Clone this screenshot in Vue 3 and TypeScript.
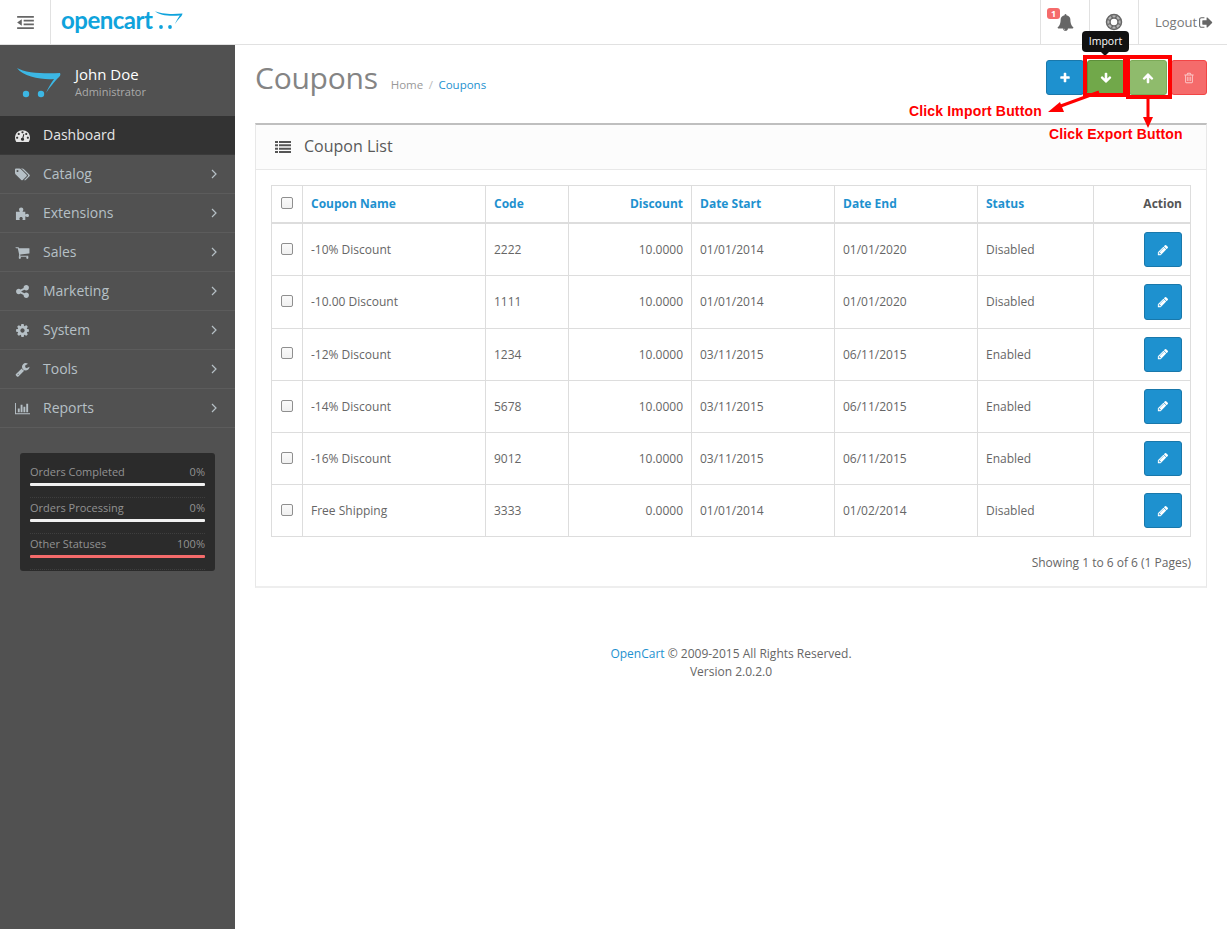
<template>
  <div class="page">
    <header class="topbar">
      <button class="menu-toggle" aria-label="Toggle menu">
        <svg viewBox="0 0 18 14" width="17" height="13"><path d="M0 0h18v2H0zM7 4h11v2H7zM7 8h11v2H7zM0 12h18v2H0zM5 3.500v7L0 7z" fill="#666" /></svg>
      </button>
      <div class="brand">
        <span class="brand-name">opencart</span>
        <svg class="brand-cart" viewBox="0 0 28 19" width="28" height="19">
          <path d="M0 0c5 3 17 3.500 27.500 2.500-.2 1.500-1 2.600-2.200 3.800-2 2-3.800 4.500-5.300 6.700 1-2.800 3-6 4.800-8.600C15 5.300 4 4.500 0 0z" fill="#0fa3dc" />
          <circle cx="6" cy="16" r="1.900" fill="#0fa3dc" /><circle cx="15" cy="16" r="1.900" fill="#0fa3dc" />
        </svg>
      </div>
      <ul class="top-links">
        <li class="bell">
          <span class="badge">1</span>
          <svg viewBox="0 0 1792 1792" width="17" height="17"><path :d="icons.bell.d" fill="#666" /></svg>
        </li>
        <li class="ring">
          <svg viewBox="0 0 18 18" width="18" height="18">
            <circle cx="9" cy="9" r="5.800" fill="none" stroke="#b5b5b5" stroke-width="3" />
            <circle cx="9" cy="9" r="7.500" fill="none" stroke="#666" stroke-width="1.500" />
            <circle cx="9" cy="9" r="4" fill="none" stroke="#666" stroke-width="1.500" />
            <path d="M6.500 2.500l1 3M11.500 2.500l-1 3M6.500 15.500l1-3M11.500 15.500l-1-3M2.500 6.500l3 1M15.500 6.500l-3 1M2.500 11.500l3-1M15.500 11.500l-3-1" stroke="#666" stroke-width="1.300" />
          </svg>
        </li>
        <li class="logout">
          <span>Logout</span>
          <svg viewBox="0 0 1664 1792" width="15" height="15"><path :d="icons.logout.d" fill="#666" /></svg>
        </li>
      </ul>
    </header>

    <div class="body-row">
      <aside class="sidebar">
        <div class="profile">
          <svg viewBox="0 0 44 32" width="44" height="32">
            <path d="M0 0c8 5 28 6 43 5 1 2 0 3-2 5-3 3-8 9-12 15 2-5 5-10 8-14C26 12 6 9 0 0z" fill="#3cb7e4" />
            <circle cx="9" cy="26" r="3.200" fill="#3cb7e4" /><circle cx="24" cy="26" r="3.200" fill="#3cb7e4" />
          </svg>
          <div>
            <div class="profile-name">John Doe</div>
            <small>Administrator</small>
          </div>
        </div>
        <nav>
          <a v-for="item in menu" :key="item.label" class="nav-item" :class="{ active: item.active }">
            <svg class="nav-icon" :viewBox="icons[item.icon].vb" width="15" height="15"><path :d="icons[item.icon].d" fill="currentColor" /></svg>
            <span>{{ item.label }}</span>
            <svg v-if="!item.active" class="nav-caret" viewBox="0 0 6 10" width="6" height="10"><path d="M1 1l4 4-4 4" fill="none" stroke="currentColor" stroke-width="1.200" /></svg>
          </a>
        </nav>
        <div class="stats">
          <div v-for="s in stats" :key="s.label" class="stat">
            <div class="stat-head"><span>{{ s.label }}</span><span>{{ s.value }}</span></div>
            <div class="stat-bar" :class="{ full: s.value === '100%' }"></div>
          </div>
        </div>
      </aside>

      <main class="content">
        <div class="page-header">
          <h1>Coupons</h1>
          <ul class="crumbs">
            <li>Home</li>
            <li class="sep">/</li>
            <li class="current">Coupons</li>
          </ul>
          <div class="actions">
            <button class="btn blue"><svg viewBox="0 0 1792 1792" width="12" height="12"><path :d="icons.plus.d" /></svg></button>
            <button class="btn green-dark"><svg viewBox="0 0 1792 1792" width="12" height="12"><path :d="icons.down.d" /></svg></button>
            <button class="btn green"><svg viewBox="0 0 1792 1792" width="12" height="12"><path :d="icons.up.d" /></svg></button>
            <button class="btn red"><svg viewBox="0 0 1792 1792" width="12" height="12"><path :d="icons.trash.d" /></svg></button>
          </div>
        </div>

        <section class="panel">
          <div class="panel-head">
            <svg viewBox="0 0 16 12" width="16" height="12"><path d="M0 0h3v2H0zM4 0h12v2H4zM0 3.300h3v2H0zM4 3.300h12v2H4zM0 6.700h3v2H0zM4 6.700h12v2H4zM0 10h3v2H0zM4 10h12v2H4z" fill="#555" /></svg>
            <h3>Coupon List</h3>
          </div>
          <div class="panel-body">
            <table>
              <thead>
                <tr>
                  <th class="check"><input type="checkbox" /></th>
                  <th class="link name">Coupon Name</th>
                  <th class="link code">Code</th>
                  <th class="link right disc">Discount</th>
                  <th class="link start">Date Start</th>
                  <th class="link end">Date End</th>
                  <th class="link status">Status</th>
                  <th class="right">Action</th>
                </tr>
              </thead>
              <tbody>
                <tr v-for="c in coupons" :key="c.code">
                  <td class="check"><input type="checkbox" /></td>
                  <td>{{ c.name }}</td>
                  <td>{{ c.code }}</td>
                  <td class="right">{{ c.discount }}</td>
                  <td>{{ c.start }}</td>
                  <td>{{ c.end }}</td>
                  <td>{{ c.status }}</td>
                  <td class="right">
                    <button class="btn blue edit"><svg viewBox="0 0 1792 1792" width="12" height="12"><path :d="icons.pencil.d" /></svg></button>
                  </td>
                </tr>
              </tbody>
            </table>
            <div class="results">Showing 1 to 6 of 6 (1 Pages)</div>
          </div>
        </section>

        <footer class="foot">
          <div><span class="current">OpenCart</span> © 2009-2015 All Rights Reserved.</div>
          <div>Version 2.0.2.0</div>
        </footer>
      </main>
    </div>

    <!-- tooltip and the red notes sit on top of the screenshot -->
    <div class="tooltip">Import</div>
    <div class="mark mark-import"></div>
    <div class="mark mark-export"></div>
    <svg class="arrows" width="1227" height="929" viewBox="0 0 1227 929">
      <path d="M1099 92L1058 107" stroke="#f00" stroke-width="3" fill="none" />
      <path d="M1048 112l12-10 4 10z" fill="#f00" />
      <path d="M1148 97V118" stroke="#f00" stroke-width="3" fill="none" />
      <path d="M1148 128l-5-11h10z" fill="#f00" />
    </svg>
    <span class="note note-import">Click Import Button</span>
    <span class="note note-export">Click Export Button</span>
  </div>
</template>

<script setup lang="ts">
interface Icon { vb: string; d: string }
interface Coupon { name: string; code: string; discount: string; start: string; end: string; status: string }

const icons: Record<string, Icon> = {
  bell: { vb: '0 0 1792 1792', d: 'M912 1696q0-16-16-16-59 0-101.5-42.5t-42.5-101.5q0-16-16-16t-16 16q0 73 51.5 124.5t124.5 51.5q16 0 16-16zm816-288q0 52-38 90t-90 38h-448q0 106-75 181t-181 75-181-75-75-181h-448q-52 0-90-38t-38-90q50-42 91-88t85-119.5 74.5-158.5 50-206 19.5-260q0-152 117-282.5t307-158.5q-8-19-8-39 0-40 28-68t68-28 68 28 28 68q0 20-8 39 190 28 307 158.5t117 282.5q0 139 19.5 260t50 206 74.5 158.5 85 119.5 91 88z' },
  logout: { vb: '0 0 1664 1792', d: 'M704 1440q0 4 1 20t.5 26.5-3 23.5-10 19.5-20.5 6.500h-320q-119 0-203.500-84.500t-84.500-203.500v-704q0-119 84.500-203.500t203.500-84.500h320q13 0 22.500 9.500t9.500 22.500q0 4 1 20t.5 26.500-3 23.500-10 19.500-20.500 6.500h-320q-66 0-113 47t-47 113v704q0 66 47 113t113 47h312l11.500 1 11.500 3 8 5.500 7 9 2 13.500zm928-544q0 26-19 45l-544 544q-19 19-45 19t-45-19-19-45v-288h-448q-26 0-45-19t-19-45v-384q0-26 19-45t45-19h448v-288q0-26 19-45t45-19 45 19l544 544q19 19 19 45z' },
  plus: { vb: '0 0 1792 1792', d: 'M1600 736v192q0 40-28 68t-68 28h-416v416q0 40-28 68t-68 28h-192q-40 0-68-28t-28-68v-416h-416q-40 0-68-28t-28-68v-192q0-40 28-68t68-28h416v-416q0-40 28-68t68-28h192q40 0 68 28t28 68v416h416q40 0 68 28t28 68z' },
  down: { vb: '0 0 1792 1792', d: 'M1675 832q0 53-37 90l-651 652q-39 37-91 37-53 0-90-37l-651-652q-38-36-38-90 0-53 38-91l74-75q39-37 91-37 53 0 90 37l294 294v-704q0-52 38-90t90-38h128q52 0 90 38t38 90v704l294-294q37-37 90-37 52 0 91 37l75 75q37 39 37 91z' },
  up: { vb: '0 0 1792 1792', d: 'M1675 971q0 51-37 90l-75 75q-38 38-91 38-54 0-90-38l-294-293v704q0 52-37.500 84.500t-90.500 32.500h-128q-53 0-90.500-32.500t-37.500-84.500v-704l-294 293q-36 38-90 38t-90-38l-75-75q-38-38-38-90 0-53 38-91l651-651q35-37 90-37 54 0 91 37l651 651q37 39 37 91z' },
  pencil: { vb: '0 0 1792 1792', d: 'M491 1536l91-91-235-235-91 91v107h128v128h107zm523-928q0-22-22-22-10 0-17 7l-542 542q-7 7-7 17 0 22 22 22 10 0 17-7l542-542q7-7 7-17zm-54-192l416 416-832 832h-416v-416zm683 96q0 53-37 90l-166 166-416-416 166-165q36-38 90-38 53 0 91 38l235 234q37 39 37 91z' },
  trash: { vb: '0 0 1792 1792', d: 'M704 736v576q0 14-9 23t-23 9h-64q-14 0-23-9t-9-23v-576q0-14 9-23t23-9h64q14 0 23 9t9 23zm256 0v576q0 14-9 23t-23 9h-64q-14 0-23-9t-9-23v-576q0-14 9-23t23-9h64q14 0 23 9t9 23zm256 0v576q0 14-9 23t-23 9h-64q-14 0-23-9t-9-23v-576q0-14 9-23t23-9h64q14 0 23 9t9 23zm128 724v-948h-896v948q0 22 7 40.500t14.500 27 10.500 8.500h832q3 0 10.500-8.500t14.500-27 7-40.500zm-672-1076h448l-48-117q-7-9-17-11h-317q-10 2-17 11zm928 32v64q0 14-9 23t-23 9h-96v948q0 83-47 143.500t-113 60.500h-832q-66 0-113-58.500t-47-141.500v-952h-96q-14 0-23-9t-9-23v-64q0-14 9-23t23-9h309l70-167q15-37 54-63t79-26h320q40 0 79 26t54 63l70 167h309q14 0 23 9t9 23z' },
  dashboard: { vb: '0 0 1792 1792', d: 'M384 1152q0-53-37.500-90.500t-90.500-37.500-90.500 37.500-37.500 90.500 37.500 90.500 90.500 37.500 90.500-37.500 37.500-90.500zm192-448q0-53-37.500-90.500t-90.500-37.500-90.500 37.500-37.500 90.500 37.500 90.500 90.500 37.500 90.500-37.500 37.500-90.500zm428 481l101-382q6-26-7.500-48.500t-38.500-29.500-48 6.500-30 39.500l-101 382q-60 5-107 43.500t-63 98.500q-20 77 20 146t117 89 146-20 89-117q16-60-6-117t-72-91zm660-33q0-53-37.500-90.500t-90.500-37.500-90.500 37.500-37.500 90.500 37.500 90.500 90.500 37.500 90.500-37.500 37.500-90.500zm-640-640q0-53-37.500-90.500t-90.500-37.500-90.500 37.500-37.500 90.500 37.500 90.500 90.500 37.500 90.500-37.500 37.500-90.500zm448 192q0-53-37.500-90.500t-90.500-37.500-90.500 37.500-37.500 90.500 37.500 90.500 90.500 37.500 90.500-37.500 37.500-90.500zm320 448q0 261-141 483-19 29-54 29h-1402q-35 0-54-29-141-221-141-483 0-182 71-348t191-286 286-191 348-71 348 71 286 191 191 286 71 348z' },
  tags: { vb: '0 0 1920 1792', d: 'M448 448q0-53-37.500-90.500t-90.500-37.500-90.500 37.500-37.500 90.500 37.500 90.500 90.500 37.500 90.500-37.500 37.500-90.500zm1067 576q0 53-37 90l-491 492q-39 37-91 37-53 0-90-37l-715-716q-38-37-64.500-101t-26.500-117v-416q0-52 38-90t90-38h416q53 0 117 26.500t102 64.500l715 714q37 39 37 91zm384 0q0 53-37 90l-491 492q-39 37-91 37-36 0-59-14t-53-45l470-470q37-37 37-90 0-52-37-91l-715-714q-38-38-102-64.500t-117-26.500h224q53 0 117 26.500t102 64.500l715 714q37 39 37 91z' },
  puzzle: { vb: '0 0 16 16', d: 'M1 6h4.200C4.600 5 4.300 4.400 4.300 3.600 4.300 2.300 5.300 1.500 6.600 1.500s2.300.8 2.300 2.100c0 .8-.3 1.400-.9 2.400h3v3c.8-.6 1.300-.8 2-.8 1.100 0 1.900.8 1.900 1.800s-.8 1.800-1.900 1.800c-.7 0-1.200-.2-2-.8V15H7.800c.4-.8.5-1.200.5-1.700 0-1-.8-1.700-1.800-1.700s-1.800.7-1.800 1.700c0 .5.100.9.500 1.700H1z' },
  cart: { vb: '0 0 1792 1792', d: 'M704 1536q0 52-38 90t-90 38-90-38-38-90 38-90 90-38 90 38 38 90zm896 0q0 52-38 90t-90 38-90-38-38-90 38-90 90-38 90 38 38 90zm128-1088v512q0 24-16.500 42.500t-40.500 21.500l-1044 122q13 60 13 70 0 16-24 64h920q26 0 45 19t19 45-19 45-45 19h-1024q-26 0-45-19t-19-45q0-11 8-31.500t16-36 21.500-40 15.500-29.500l-177-823h-204q-26 0-45-19t-19-45 19-45 45-19h256q16 0 28.500 6.500t19.500 15.500 13 24.500 8 26 5.500 29.500 4.500 26h1201q26 0 45 19t19 45z' },
  share: { vb: '0 0 1792 1792', d: 'M1344 1024q133 0 226.500 93.500t93.500 226.500-93.500 226.500-226.500 93.500-226.500-93.500-93.500-226.500q0-12 2-34l-360-180q-92 86-218 86-133 0-226.500-93.500t-93.500-226.500 93.500-226.500 226.500-93.500q126 0 218 86l360-180q-2-22-2-34 0-133 93.500-226.500t226.500-93.500 226.500 93.500 93.500 226.500-93.500 226.500-226.500 93.500q-126 0-218-86l-360 180q2 22 2 34t-2 34l360 180q92-86 218-86z' },
  cog: { vb: '0 0 1792 1792', d: 'M1152 896q0-106-75-181t-181-75-181 75-75 181 75 181 181 75 181-75 75-181zm512-109v222q0 12-8 23t-20 13l-185 28q-19 54-39 91 35 50 107 138 10 12 10 25t-9 23q-27 37-99 108t-94 71q-12 0-26-9l-138-108q-44 23-91 38-16 136-29 186-7 28-36 28h-222q-14 0-24.500-8.500t-11.500-21.500l-28-184q-49-16-90-37l-141 107q-10 9-25 9-14 0-25-11-126-114-165-168-7-10-7-23 0-12 8-23 15-21 51-66.500t54-70.500q-27-50-41-99l-183-27q-13-2-21-12.500t-8-23.500v-222q0-12 8-23t19-13l186-28q14-46 39-92-40-57-107-138-10-12-10-24 0-10 9-23 26-36 98.500-107.500t94.500-71.500q13 0 26 10l138 107q44-23 91-38 16-136 29-186 7-28 36-28h222q14 0 24.500 8.500t11.500 21.500l28 184q49 16 90 37l142-107q9-9 24-9 13 0 25 10 129 119 165 170 7 8 7 22 0 12-8 23-15 21-51 66.500t-54 70.500q26 50 41 98l183 28q13 2 21 12.500t8 23.500z' },
  wrench: { vb: '0 0 1792 1792', d: 'M448 1472q0-26-19-45t-45-19-45 19-19 45 19 45 45 19 45-19 19-45zm644-420l-682 682q-37 37-90 37-52 0-91-37l-106-108q-38-36-38-90 0-53 38-91l681-681q39 98 114.500 173.500t173.500 114.500zm634-435q0 39-23 106-47 134-164.500 217.500t-258.500 83.500q-185 0-316.500-131.500t-131.500-316.500 131.500-316.500 316.500-131.500q58 0 121.500 16.500t107.500 46.500q16 11 16 28t-16 28l-293 169v224l193 107q5-3 79-48.500t135.500-81 70.500-35.500q15 0 23.500 10t8.500 25z' },
  chart: { vb: '0 0 2048 1792', d: 'M640 896v512h-256v-512h256zm384-512v1024h-256v-1024h256zm1024 1152v128h-2048v-1536h128v1408h1920zm-640-896v768h-256v-768h256zm384-384v1152h-256v-1152h256z' },
}

const menu = [
  { label: 'Dashboard', icon: 'dashboard', active: true },
  { label: 'Catalog', icon: 'tags' },
  { label: 'Extensions', icon: 'puzzle' },
  { label: 'Sales', icon: 'cart' },
  { label: 'Marketing', icon: 'share' },
  { label: 'System', icon: 'cog' },
  { label: 'Tools', icon: 'wrench' },
  { label: 'Reports', icon: 'chart' },
]

const stats = [
  { label: 'Orders Completed', value: '0%' },
  { label: 'Orders Processing', value: '0%' },
  { label: 'Other Statuses', value: '100%' },
]

const coupons: Coupon[] = [
  { name: '-10% Discount', code: '2222', discount: '10.0000', start: '01/01/2014', end: '01/01/2020', status: 'Disabled' },
  { name: '-10.00 Discount', code: '1111', discount: '10.0000', start: '01/01/2014', end: '01/01/2020', status: 'Disabled' },
  { name: '-12% Discount', code: '1234', discount: '10.0000', start: '03/11/2015', end: '06/11/2015', status: 'Enabled' },
  { name: '-14% Discount', code: '5678', discount: '10.0000', start: '03/11/2015', end: '06/11/2015', status: 'Enabled' },
  { name: '-16% Discount', code: '9012', discount: '10.0000', start: '03/11/2015', end: '06/11/2015', status: 'Enabled' },
  { name: 'Free Shipping', code: '3333', discount: '0.0000', start: '01/01/2014', end: '01/02/2014', status: 'Disabled' },
]
</script>

<style>
html, body { margin: 0; background: #fff; }
</style>

<style scoped>
.page { position: relative; min-height: 929px; display: flex; flex-direction: column; font-family: "Open Sans", "Liberation Sans", sans-serif; font-size: 12px; line-height: 1.42857; color: #666; overflow: hidden; }

.topbar { height: 44px; flex: none; display: flex; align-items: stretch; background: #fff; border-bottom: 1px solid #e1e1e1; }
.menu-toggle { width: 51px; padding: 0; border: 0; border-right: 1px solid #e1e1e1; background: none; display: flex; align-items: center; justify-content: center; }
.brand { position: relative; display: flex; align-items: center; padding-left: 10px; }
.brand-name { font-family: Lato, "Open Sans", sans-serif; font-size: 24px; font-weight: 700; color: #0fa3dc; letter-spacing: -.5px; line-height: 1; margin-top: -4px; }
.brand-cart { margin-left: 3px; margin-top: -3px; }
.top-links { list-style: none; margin: 0 0 0 auto; padding: 0; display: flex; }
.top-links li { display: flex; align-items: center; justify-content: center; border-left: 1px solid #e1e1e1; position: relative; }
.bell { width: 48px; }
.ring { width: 48px; }
.top-links .logout { width: 89px; box-sizing: border-box; justify-content: flex-start; padding-left: 16px; gap: 1px; font-size: 13px; color: #777; }
.badge { position: absolute; left: 6px; top: 8px; width: 13px; height: 11px; border-radius: 3px; background: #f56b6b; color: #fff; font-size: 9px; font-weight: 700; line-height: 11px; text-align: center; }

.body-row { flex: 1; display: flex; }
.sidebar { width: 235px; flex: none; background: #515151; }
.profile { height: 71px; box-sizing: border-box; display: flex; align-items: center; gap: 14px; padding: 2px 0 0 17px; }
.profile svg { margin-top: 4px; }
.profile-name { font-size: 15px; color: #fff; line-height: 19px; }
.profile small { font-size: 11px; color: #aaa; display: block; line-height: 15px; }
.nav-item { height: 39px; box-sizing: border-box; display: flex; align-items: center; padding-left: 15px; font-size: 14px; color: #b6c0c6; border-bottom: 1px solid #5c5c5c; position: relative; }
.nav-item.active { background: #333; color: #e6e6e6; border-bottom-color: #3a3a3a; }
.nav-icon { width: 15px; margin-right: 13px; flex: none; }
.nav-caret { position: absolute; right: 18px; top: 14px; }
.stats { margin: 25px 20px 0; background: #2b2b2b; border-radius: 3px; padding: 9px 10px 0; height: 118px; box-sizing: border-box; }
.stat { height: 36px; box-sizing: border-box; border-bottom: 1px dotted #3f3f3f; }
.stat-head { display: flex; justify-content: space-between; font-size: 11px; line-height: 19px; color: #929292; }
.stat-bar { height: 3px; background: #f1f1f1; border-radius: 1px; margin-top: 2px; }
.stat-bar.full { background: #f56b6b; }

.content { flex: 1; min-width: 0; padding: 0 20px; }
.page-header { height: 78px; display: flex; align-items: flex-start; position: relative; }
h1 { margin: 15px 0 0; font-size: 30px; font-weight: 400; line-height: 36px; color: #848484; letter-spacing: -.25px; }
.crumbs { list-style: none; margin: 31px 0 0 13px; padding: 0; display: flex; gap: 5.500px; font-size: 11.500px; line-height: 18px; color: #999; }
.sep { color: #bbb; }
.current { color: #1e91cf; }
.actions { margin: 15px 0 0 auto; display: flex; gap: 4px; }
.actions .btn:first-child { margin-right: -1px; }
.btn { width: 38px; height: 35px; padding: 0; border: 1px solid; border-radius: 3px; display: flex; align-items: center; justify-content: center; fill: #fff; }
.actions .red { width: 36px; }
.blue { background: #1e91cf; border-color: #1978ab; }
.green-dark { background: #71a84a; border-color: #5d8f3b; }
.green { background: #8fbb6c; border-color: #7cab58; }
.red { background: #f56b6b; border-color: #f24545; fill: #fbc9c9; }

.panel { border: 1px solid #e8e8e8; border-top: 2px solid #bfbfbf; border-bottom: 2px solid #eee; background: #fff; }
.panel-head { height: 45px; box-sizing: border-box; padding: 0 19px 2px; display: flex; align-items: center; gap: 13px; background: #fcfcfc; border-bottom: 1px solid #e8e8e8; }
.panel-head svg { margin-top: 2px; }
h3 { margin: 0; font-size: 16px; font-weight: 400; color: #595959; }
.panel-body { padding: 15px; }
table { width: 100%; border-collapse: collapse; table-layout: fixed; }
th, td { box-sizing: border-box; border: 1px solid #ddd; padding: 8px; text-align: left; }
th { padding: 9px 8px 10px; border-bottom-width: 2px; font-weight: 700; color: #555; }
th.link { color: #1e91cf; }
.check { width: 31px; padding: 0; text-align: center; }
.name { width: 183px; }
.code { width: 83px; }
.disc { width: 123px; }
.start { width: 143px; }
.end { width: 143px; }
.status { width: 116px; }
th.right, td.right { text-align: right; }
input[type="checkbox"] { appearance: none; margin: 0 0 0 -1px; width: 12px; height: 12px; box-sizing: border-box; border: 1px solid #8f8f8f; border-radius: 2px; background: linear-gradient(#fafafa, #f0f0f0); vertical-align: middle; position: relative; top: -2px; }
.edit { height: 35.200px; margin-left: auto; }
.results { text-align: right; margin-top: 17px; }

.foot { margin-top: 57px; text-align: center; line-height: 18px; }

.tooltip { position: absolute; left: 1082px; top: 31px; width: 47px; height: 21px; background: #111; color: #fff; border-radius: 4px; font-size: 10.500px; line-height: 21px; text-align: center; }
.tooltip::after { content: ""; position: absolute; left: 19px; top: 21px; border: 4px solid transparent; border-top-color: #111; border-bottom: 0; }
.mark { position: absolute; top: 55px; box-sizing: border-box; border: 4px solid #f00; }
.mark-import { left: 1083px; width: 44px; height: 42px; }
.mark-export { left: 1126px; width: 46px; height: 44px; }
.arrows { position: absolute; left: 0; top: 0; pointer-events: none; }
.note { position: absolute; font-family: "Liberation Sans", Arial, sans-serif; font-size: 14px; font-weight: 700; letter-spacing: .16px; line-height: 16px; color: #f00; white-space: nowrap; }
.note-import { left: 909px; top: 103px; }
.note-export { left: 1049px; top: 126px; }
</style>
